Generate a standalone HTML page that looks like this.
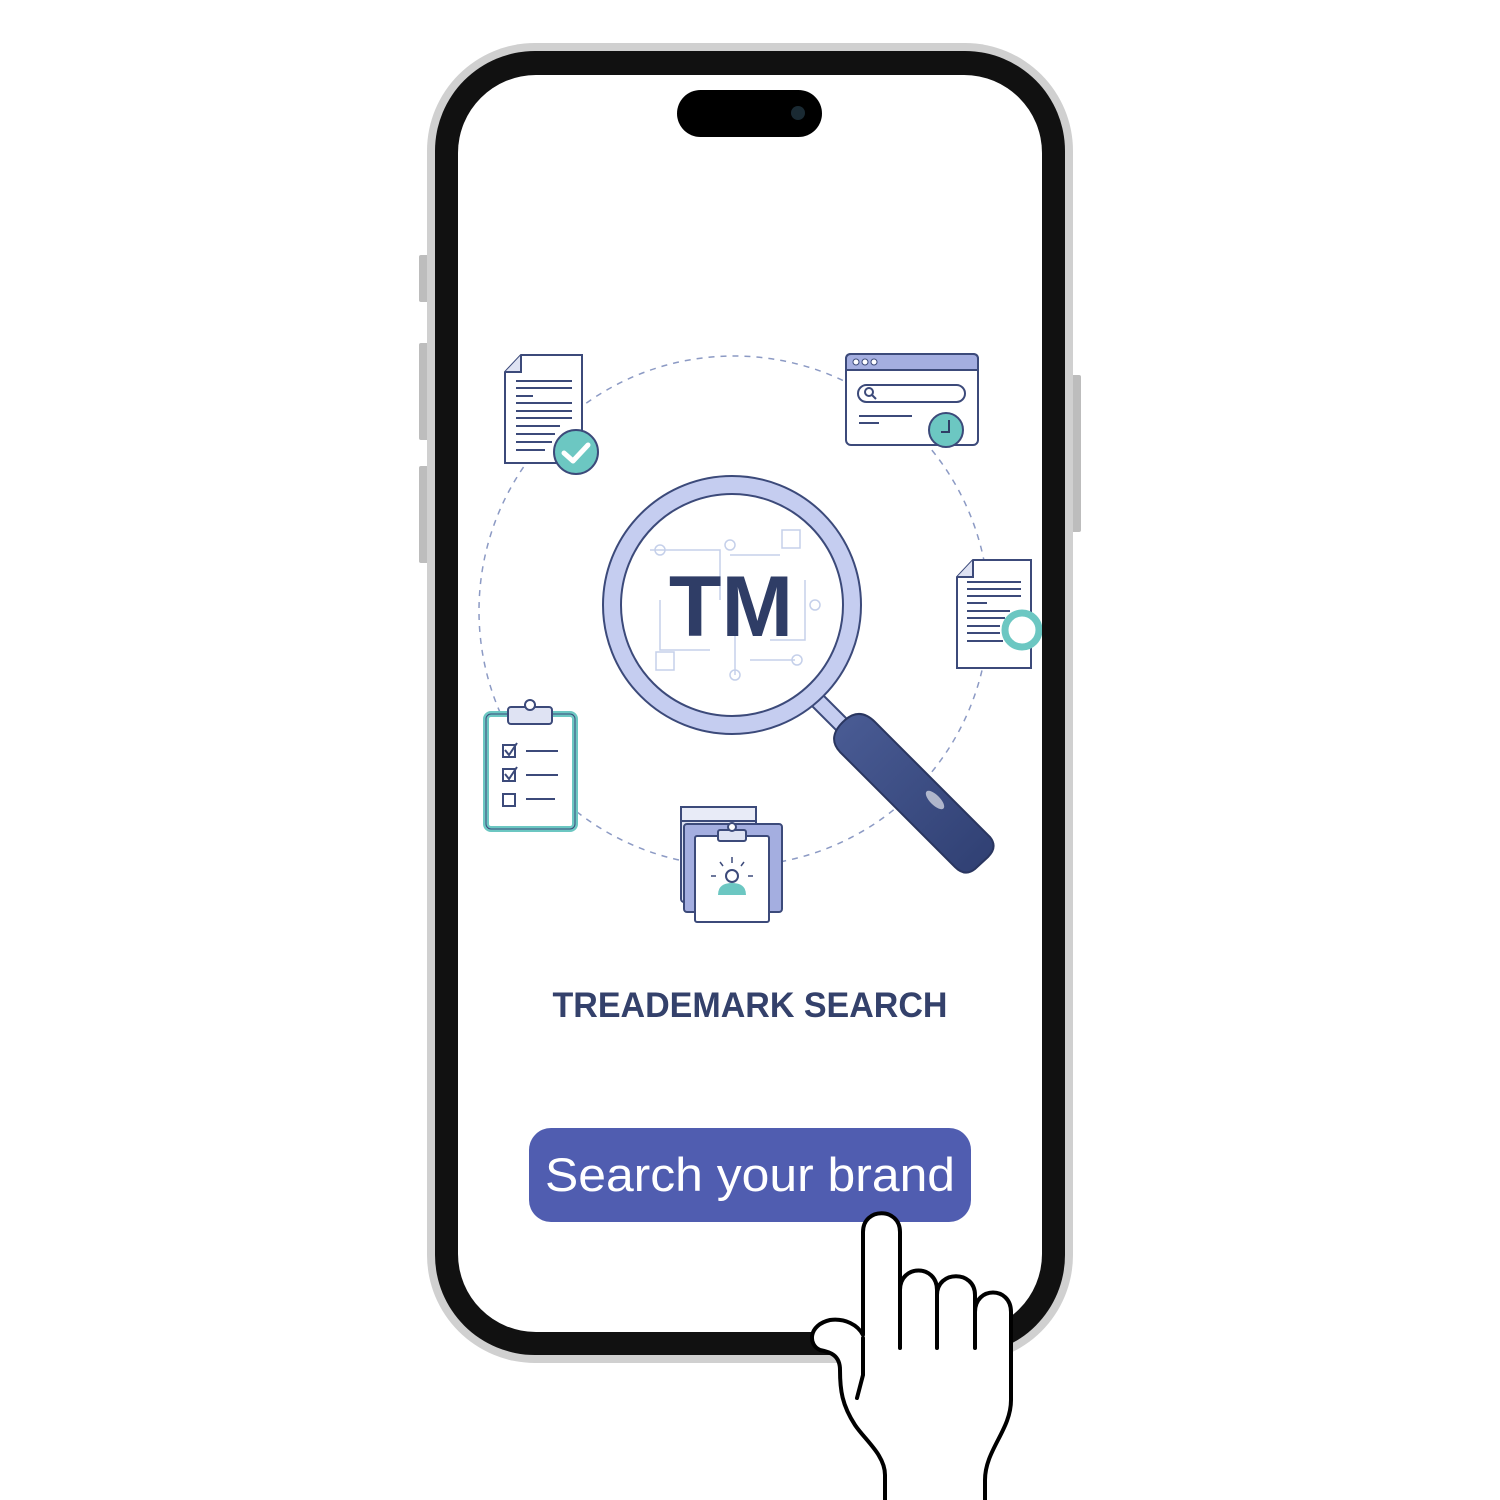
<!DOCTYPE html>
<html><head><meta charset="utf-8"><style>
html,body{margin:0;padding:0;background:#fff;width:1500px;height:1500px;overflow:hidden}
svg{display:block}
</style></head><body>
<svg width="1500" height="1500" viewBox="0 0 1500 1500" xmlns="http://www.w3.org/2000/svg">
<defs>
<clipPath id="scr"><rect x="458" y="75" width="584" height="1257" rx="78"/></clipPath>
<linearGradient id="hdl" x1="0" y1="0" x2="1" y2="1"><stop offset="0" stop-color="#4a5c95"/><stop offset="1" stop-color="#2f3f72"/></linearGradient>
</defs>
<rect x="419" y="255" width="12" height="47" rx="2" fill="#bdbdbd"/>
<rect x="419" y="343" width="12" height="97" rx="2" fill="#bdbdbd"/>
<rect x="419" y="466" width="12" height="97" rx="2" fill="#bdbdbd"/>
<rect x="1069" y="375" width="12" height="157" rx="2" fill="#bdbdbd"/>
<rect x="427" y="43" width="646" height="1320" rx="108" fill="#d0d0d0"/>
<rect x="435" y="51" width="630" height="1304" rx="100" fill="#111"/>
<rect x="458" y="75" width="584" height="1257" rx="78" fill="#fff"/>
<rect x="677" y="90" width="145" height="47" rx="23.5" fill="#000"/>
<circle cx="798" cy="113" r="7" fill="#1a2a33"/>
<g clip-path="url(#scr)">
<circle cx="734" cy="611" r="255" fill="none" stroke="#8c9ac4" stroke-width="1.5" stroke-dasharray="6 6"/>
<path d="M505,372 L521,355 L582,355 L582,463 L505,463 Z" fill="#fff" stroke="#3c4a7a" stroke-width="2"/>
<path d="M505,372 L521,372 L521,355" fill="#dfe3f3" stroke="#3c4a7a" stroke-width="2"/>
<g stroke="#3c4a7a" stroke-width="2"><line x1="516" y1="381" x2="572" y2="381"/><line x1="516" y1="388" x2="572" y2="388"/><line x1="516" y1="396" x2="533" y2="396"/><line x1="516" y1="403" x2="572" y2="403"/><line x1="516" y1="411" x2="572" y2="411"/><line x1="516" y1="418" x2="572" y2="418"/><line x1="516" y1="426" x2="560" y2="426"/><line x1="516" y1="434" x2="555" y2="434"/><line x1="516" y1="442" x2="552" y2="442"/><line x1="516" y1="450" x2="545" y2="450"/></g>
<circle cx="576" cy="452" r="22" fill="#6cc7c2" stroke="#3c4a7a" stroke-width="2"/>
<path d="M564,453 L573,461 L588,445" fill="none" stroke="#fff" stroke-width="5" stroke-linecap="round" stroke-linejoin="round"/>
<rect x="846" y="354" width="132" height="91" rx="5" fill="#fff" stroke="#3c4a7a" stroke-width="2"/>
<path d="M846,370 L846,359 Q846,354 851,354 L973,354 Q978,354 978,359 L978,370 Z" fill="#a4aee0" stroke="#3c4a7a" stroke-width="2"/>
<circle cx="856" cy="362" r="3" fill="#fff" stroke="#3c4a7a"/><circle cx="865" cy="362" r="3" fill="#fff" stroke="#3c4a7a"/><circle cx="874" cy="362" r="3" fill="#fff" stroke="#3c4a7a"/>
<rect x="858" y="385" width="107" height="17" rx="8.5" fill="#fff" stroke="#3c4a7a" stroke-width="2"/>
<circle cx="869" cy="392" r="4" fill="none" stroke="#3c4a7a" stroke-width="2"/><line x1="872" y1="395" x2="876" y2="399" stroke="#3c4a7a" stroke-width="2"/>
<line x1="859" y1="416" x2="912" y2="416" stroke="#3c4a7a" stroke-width="2"/><line x1="859" y1="423" x2="879" y2="423" stroke="#3c4a7a" stroke-width="2"/>
<circle cx="946" cy="430" r="17" fill="#6cc7c2" stroke="#3c4a7a" stroke-width="2"/>
<path d="M949,420 L949,432 L941,432" fill="none" stroke="#2f3d66" stroke-width="2"/>
<path d="M957,577 L973,560 L1031,560 L1031,668 L957,668 Z" fill="#fff" stroke="#3c4a7a" stroke-width="2"/>
<path d="M957,577 L973,577 L973,560" fill="#dfe3f3" stroke="#3c4a7a" stroke-width="2"/>
<g stroke="#3c4a7a" stroke-width="2"><line x1="967" y1="582" x2="1021" y2="582"/><line x1="967" y1="589" x2="1021" y2="589"/><line x1="967" y1="596" x2="1021" y2="596"/><line x1="967" y1="603" x2="987" y2="603"/><line x1="967" y1="611" x2="1010" y2="611"/><line x1="967" y1="618" x2="1005" y2="618"/><line x1="967" y1="626" x2="1000" y2="626"/><line x1="967" y1="633" x2="1000" y2="633"/><line x1="967" y1="641" x2="1003" y2="641"/></g>
<circle cx="1022" cy="630" r="17" fill="#fff" stroke="#6cc7c2" stroke-width="7"/>
<rect x="486" y="714" width="89" height="115" rx="5" fill="#fff" stroke="#6cc7c2" stroke-width="6"/>
<rect x="486" y="714" width="89" height="115" rx="5" fill="none" stroke="#3c4a7a" stroke-width="1"/>
<rect x="508" y="707" width="44" height="17" rx="3" fill="#dfe3f3" stroke="#3c4a7a" stroke-width="2"/>
<circle cx="530" cy="705" r="5" fill="#fff" stroke="#3c4a7a" stroke-width="2"/>
<g stroke="#3c4a7a" stroke-width="2" fill="none"><rect x="503" y="745" width="12" height="12"/><rect x="503" y="769" width="12" height="12"/><rect x="503" y="794" width="12" height="12"/><path d="M505,750 L509,755 L517,743"/><path d="M505,774 L509,779 L517,767"/><line x1="526" y1="751" x2="558" y2="751"/><line x1="526" y1="775" x2="558" y2="775"/><line x1="526" y1="799" x2="555" y2="799"/></g>
<rect x="681" y="807" width="75" height="95" rx="3" fill="#dfe3f3" stroke="#3c4a7a" stroke-width="2"/>
<rect x="681" y="807" width="75" height="14" fill="#e8ebf7" stroke="#3c4a7a" stroke-width="2"/>
<rect x="684" y="824" width="98" height="88" rx="3" fill="#a4aee0" stroke="#3c4a7a" stroke-width="2"/>
<rect x="695" y="836" width="74" height="86" rx="2" fill="#fff" stroke="#3c4a7a" stroke-width="2"/>
<rect x="718" y="830" width="28" height="11" rx="2" fill="#dfe3f3" stroke="#3c4a7a" stroke-width="2"/>
<circle cx="732" cy="827" r="4" fill="#fff" stroke="#3c4a7a" stroke-width="2"/>
<circle cx="732" cy="876" r="6" fill="#fff" stroke="#3c4a7a" stroke-width="2"/>
<path d="M718,895 Q718,883 732,883 Q746,883 746,895 Z" fill="#6cc7c2"/>
<g stroke="#3c4a7a" stroke-width="1.5"><line x1="732" y1="857" x2="732" y2="863"/><line x1="720" y1="862" x2="723" y2="866"/><line x1="744" y1="862" x2="741" y2="866"/><line x1="711" y1="876" x2="716" y2="876"/><line x1="748" y1="876" x2="753" y2="876"/></g>
<path d="M818,690 L849,721 L838,732 L807,701 Z" fill="#c5cdf0" stroke="#3c4a7a" stroke-width="2"/>
<path d="M845,720 Q860,707 875,722 L990,837 Q998,847 988,857 L975,869 Q965,877 955,867 L840,752 Q826,737 845,720 Z" fill="url(#hdl)" stroke="#2a3660" stroke-width="2"/>
<ellipse cx="935" cy="800" rx="12" ry="5" fill="#fff" opacity="0.6" transform="rotate(45 935 800)"/>
<circle cx="732" cy="605" r="129" fill="#c5cdf0" stroke="#3c4a7a" stroke-width="2"/>
<circle cx="732" cy="605" r="111" fill="#fff" stroke="#3c4a7a" stroke-width="2"/>
<g stroke="#c5d0ea" stroke-width="1.5" fill="none"><path d="M650,550 L720,550 L720,600"/><path d="M730,555 L780,555"/><path d="M660,600 L660,650 L710,650"/><path d="M735,620 L735,675"/><path d="M750,660 L795,660"/><path d="M805,580 L805,640 L770,640"/><circle cx="660" cy="550" r="5"/><circle cx="730" cy="545" r="5"/><circle cx="815" cy="605" r="5"/><circle cx="735" cy="675" r="5"/><circle cx="797" cy="660" r="5"/><rect x="656" y="652" width="18" height="18"/><rect x="782" y="530" width="18" height="18"/></g>
<text x="731" y="636" text-anchor="middle" font-family="Liberation Sans, sans-serif" font-weight="bold" font-size="86" fill="#2f3d66">TM</text>
</g>
<text x="750" y="1017" text-anchor="middle" font-family="Liberation Sans, sans-serif" font-weight="bold" font-size="35" fill="#34416b" textLength="395" lengthAdjust="spacingAndGlyphs">TREADEMARK SEARCH</text>
<rect x="529" y="1128" width="442" height="94" rx="22" fill="#505db0"/>
<text x="750" y="1191" text-anchor="middle" font-family="Liberation Sans, sans-serif" font-size="47" fill="#fff" textLength="410" lengthAdjust="spacingAndGlyphs">Search your brand</text>
<path d="M885,1500 L885,1475 C885,1455 865,1440 855,1425 C842,1405 840,1390 840,1370 C840,1355 830,1352 820,1350 C808,1345 808,1325 830,1320 C845,1318 858,1325 863,1335 L863,1232 C863,1207 900,1207 900,1232 L900,1290 C900,1264 937,1264 937,1290 L937,1295 C937,1270 975,1270 975,1295 L975,1312 C975,1286 1011,1286 1011,1312 L1011,1400 C1011,1430 985,1450 985,1480 L985,1500" fill="#fff" stroke="#000" stroke-width="4" stroke-linejoin="round"/>
<g stroke="#000" stroke-width="4" stroke-linecap="round" fill="none"><line x1="900" y1="1288" x2="900" y2="1348"/><line x1="937" y1="1293" x2="937" y2="1348"/><line x1="975" y1="1310" x2="975" y2="1348"/><path d="M863,1338 L863,1375 L857,1398"/></g>
</svg>
</body></html>
